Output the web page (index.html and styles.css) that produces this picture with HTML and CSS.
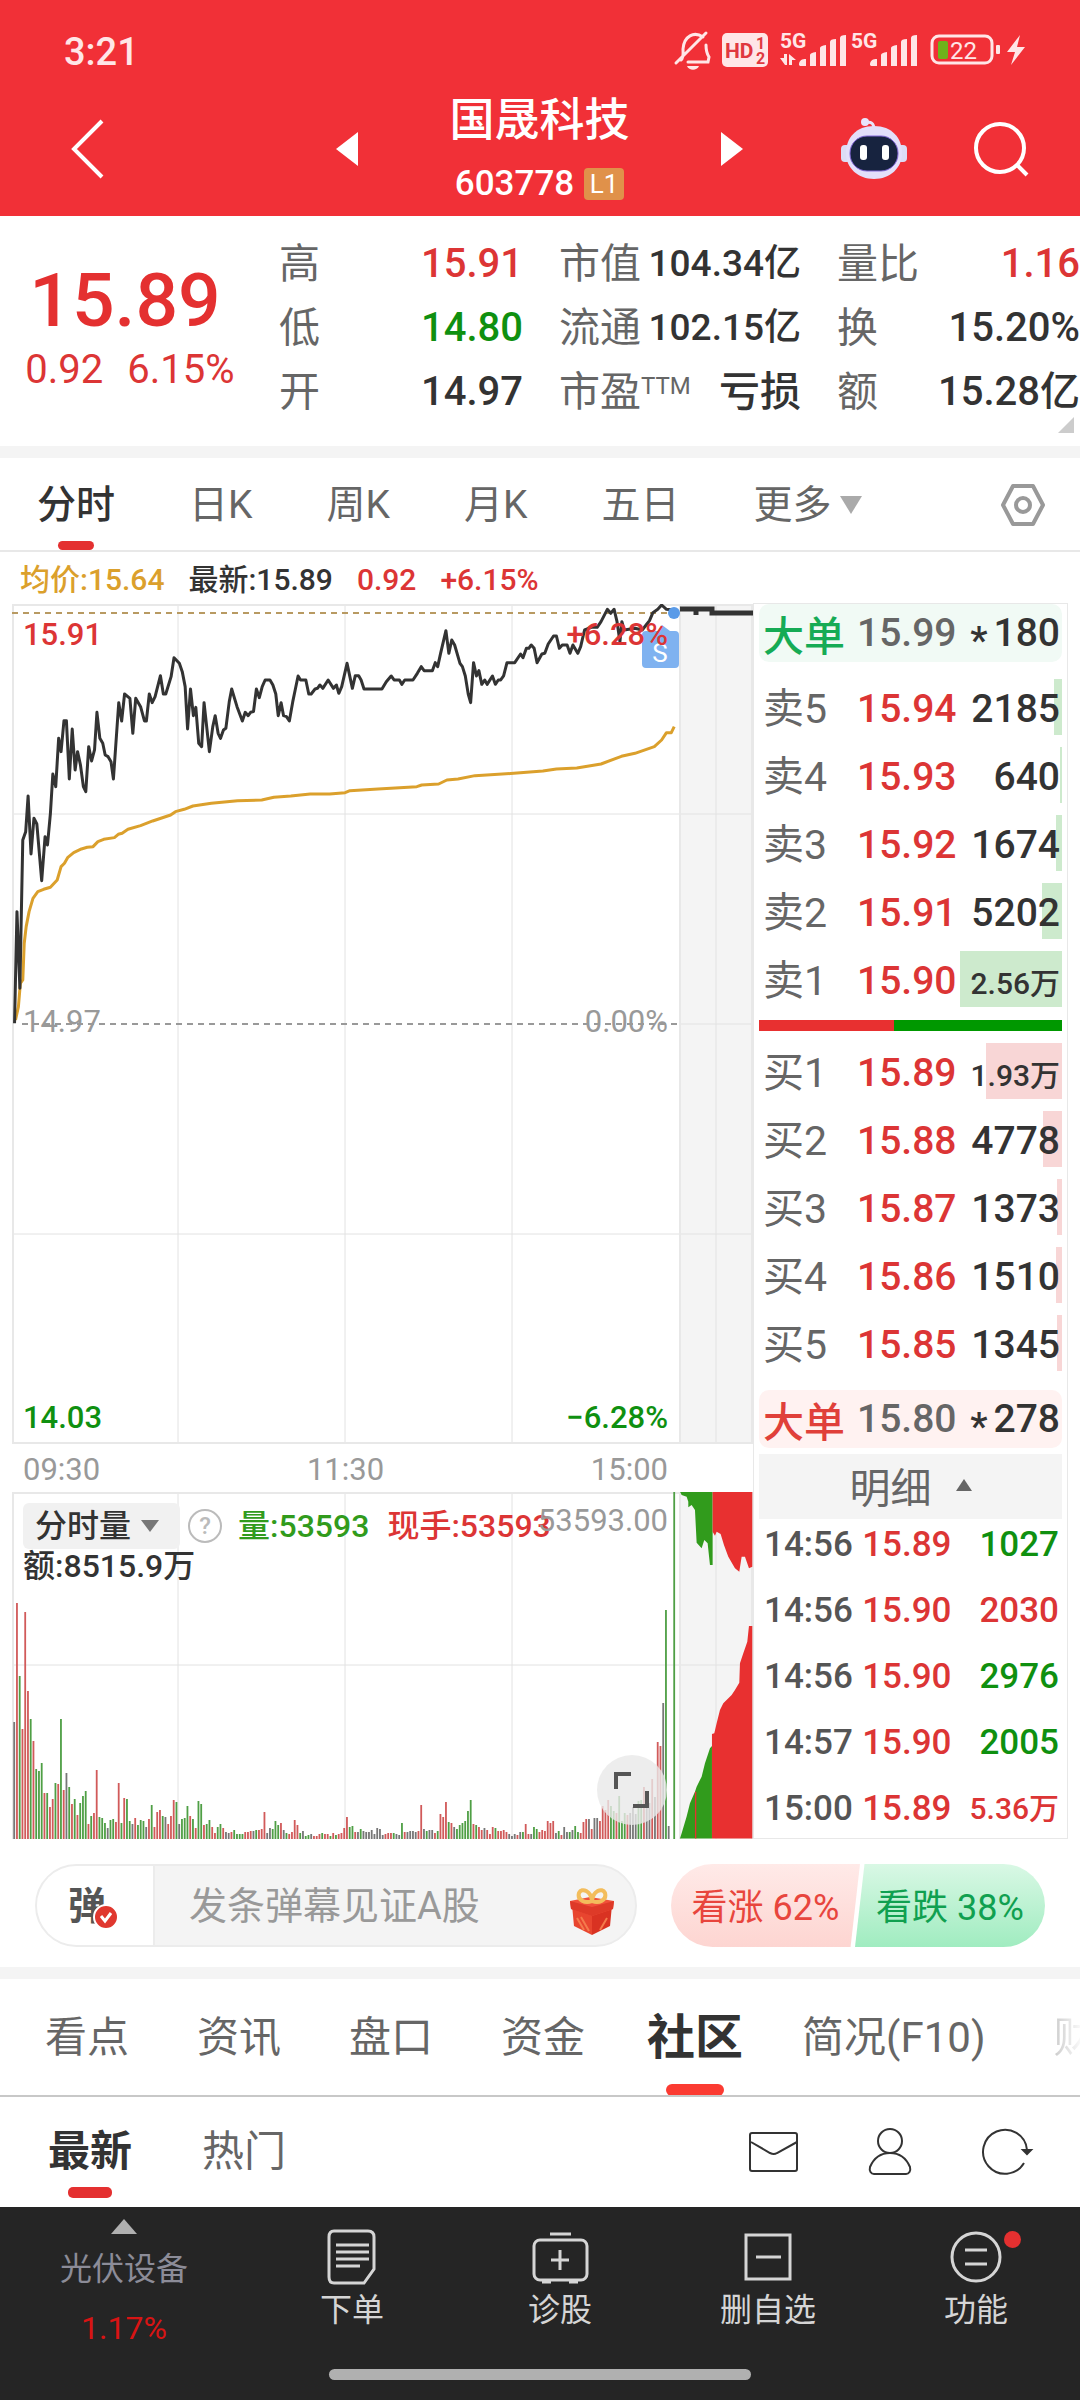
FILE: index.html
```
<!DOCTYPE html>
<html lang="zh-CN">
<head>
	<meta charset="UTF-8">
	<meta name="viewport" content="width=device-width">
	<title>国晟科技 603778</title>
	<link rel="stylesheet" href="styles.css">
</head>
<body>
<header class="header">
	<div class="status">
		<span class="clock">3:21</span>
		<svg class="status_icons" width="352" height="42" viewBox="0 0 352 42">
			<g fill="none" stroke="#ffe6e7" stroke-width="3" stroke-linecap="round">
				<path d="M7 29c3-3 2-6 2-11C10 5 20 0 29 6M32 14c0 6 1 9 3 12l-1 5H14M2 32L32 2"/>
				<rect x="258" y="5" width="60" height="27" rx="7"/>
			</g>
			<path d="M13 35h12c-2 5-10 5-12 0z" fill="#ffe6e7"/>
			<rect x="48" y="2" width="46" height="34" rx="5" fill="#ffe6e7"/>
			<g class="status_hd"><text x="51" y="27" font-size="21">HD</text><text x="82" y="18" font-size="16">1</text><text x="82" y="33" font-size="16">2</text></g>
			<g class="status_5g"><text x="106" y="17">5G</text><text x="177" y="17">5G</text></g>
			<g fill="#ffe6e7">
				<path d="M106 27h4v-4h3v11h-2zM115 34V23l7 6h-4v5z"/>
				<path d="M125 34c0-5 3-6 7-6v7h-6zM136 24q0-2 6-3v14h-6zM146 17q0-2 6-3v21h-6zM156 11q0-3 6-3v27h-6zM166 7q0-3 6-3v31h-6z"/>
				<path d="M196 34c0-5 3-6 7-6v7h-6zM207 24q0-2 6-3v14h-6zM217 17q0-2 6-3v21h-6zM227 11q0-3 6-3v27h-6zM237 7q0-3 6-3v31h-6z"/>
				<rect x="322" y="14" width="4" height="9" rx="1"/>
				<path d="M346 4l-13 17h8l-4 13 14-18h-8z"/>
			</g>
			<rect x="264" y="10" width="10" height="18" rx="2" fill="#6fb31b"/>
			<text class="status_bat" x="276" y="28">22</text>
		</svg>
	</div>
	<nav class="nav">
		<button class="back" aria-label="返回"><svg width="38" height="62" viewBox="0 0 38 62"><path d="M34 3L6 31l28 28" fill="none" stroke="#fff" stroke-width="4"/></svg></button>
		<button class="prev" aria-label="上一只"><svg width="22" height="34"><path d="M22 0v34L0 17z" fill="#fff"/></svg></button>
		<div class="stock">
			<h1>国晟科技</h1>
			<p>603778<span class="level">L1</span></p>
		</div>
		<button class="next" aria-label="下一只"><svg width="22" height="34"><path d="M0 0v34l22-17z" fill="#fff"/></svg></button>
		<button class="robot" aria-label="智能助手">
			<svg width="66" height="62" viewBox="0 0 66 62">
				<path d="M24 5c6-2 9 0 9 7" fill="none" stroke="#e8e4fb" stroke-width="3"/>
				<circle cx="24" cy="4" r="4" fill="#e8e4fb"/>
				<rect x="0" y="27" width="10" height="17" rx="4" fill="#dcdcf5"/>
				<rect x="56" y="27" width="10" height="17" rx="4" fill="#dcdcf5"/>
				<path d="M33 8c18 0 28 12 28 27S49 61 33 61 5 50 5 35 15 8 33 8z" fill="#e3dffa"/>
				<rect x="9" y="18" width="48" height="35" rx="17" fill="#17233f" stroke="#8368d8"/>
				<rect x="19" y="27" width="7" height="15" rx="3" fill="#fff"/>
				<rect x="41" y="27" width="7" height="15" rx="3" fill="#fff"/>
			</svg>
		</button>
		<button class="search" aria-label="搜索"><svg width="56" height="56" viewBox="0 0 56 56" fill="none" stroke="#fff" stroke-width="4"><circle cx="27" cy="27" r="24"/><path d="M44 44l10 10"/></svg></button>
	</nav>
</header>

<section class="quote">
	<div class="price">
		<strong>15.89</strong>
		<p><span>0.92</span><span>6.15%</span></p>
	</div>
	<table class="col_a">
		<tr><th>高</th><td class="red">15.91</td></tr>
		<tr><th>低</th><td class="green">14.80</td></tr>
		<tr><th>开</th><td>14.97</td></tr>
	</table>
	<table class="col_b">
		<tr><th>市值</th><td>104.34亿</td></tr>
		<tr><th>流通</th><td>102.15亿</td></tr>
		<tr><th>市盈<sup>TTM</sup></th><td class="word">亏损</td></tr>
	</table>
	<table class="col_c">
		<tr><th>量比</th><td class="red">1.16</td></tr>
		<tr><th>换</th><td>15.20%</td></tr>
		<tr><th>额</th><td>15.28亿</td></tr>
	</table>
	<i class="corner"></i>
</section>

<nav class="period">
	<button class="on">分时</button>
	<button>日K</button>
	<button>周K</button>
	<button>月K</button>
	<button>五日</button>
	<button class="more">更多<svg width="22" height="18"><path d="M0 0h22L11 18z" fill="#aaa"/></svg></button>
	<button class="setting" aria-label="设置"><svg width="46" height="44" viewBox="0 0 46 44" fill="none" stroke="#999" stroke-width="4"><path d="M13 3h20l10 19-10 19H13L3 22z" stroke-linejoin="round"/><circle cx="23" cy="22" r="7"/></svg></button>
</nav>

<main class="board">
	<div class="charts">
		<p class="legend"><span class="avg">均价:15.64</span><span>最新:15.89</span><span class="red">0.92</span><span class="red">+6.15%</span></p>
		<div class="chart price_chart">
			<svg viewBox="0 0 741 840" preserveAspectRatio="none">
				<rect x="668" width="73" height="840" fill="#f4f4f4"/>
				<path class="grid" d="M166 0v840M333 0v840M500 0v840M704 0v840M0 210h741M668 420h73M0 630h741"/>
				<path class="frame" d="M1 1h739v838H1zM668 0v840"/>
				<path d="M0 9h661" stroke="#b89a62" stroke-width="2" stroke-dasharray="6 5"/>
				<path d="M10 420h655" stroke="#999" stroke-width="2" stroke-dasharray="6 5"/>
				<g class="lines" transform="translate(-12 -54) scale(.4847 .3333)">
					<polyline stroke="#dba02c" points="32,1410 38,1370 42,1300 47,1290 50,1180 54,1130 60,1085 68,1045 78,1025 90,1018 104,1012 118,990 126,950 133,940 140,922 152,908 168,897 180,892 192,890 202,875 214,868 236,863 244,853 252,850 264,838 290,827 315,813 352,795 362,785 380,778 398,768 436,760 490,752 540,750 565,742 600,738 640,732 680,732 712,728 722,722 780,717 860,710 870,705 905,702 922,690 945,687 980,677 1060,670 1120,663 1148,657 1190,654 1240,642 1282,619 1310,610 1350,590 1365,570 1375,548 1385,548 1391,530"/>
					<polyline stroke="#333" points="30,1420 35,1085 41,1315 47,870 53,845 58,738 64,912 70,805 76,822 86,992 93,860 98,885 104,790 109,672 115,710 121,565 126,605 132,512 137,512 143,687 149,537 155,660 160,605 166,645 172,710 177,725 183,590 189,633 195,600 200,487 206,565 212,580 217,615 223,620 229,635 234,687 245,458 251,513 257,432 268,445 274,550 280,445 290,470 298,513 302,513 308,432 314,458 320,440 331,377 337,432 342,432 353,380 359,323 370,340 376,365 382,410 387,537 393,417 399,497 404,472 410,580 416,590 421,458 432,605 439,530 444,497 450,550 455,565 461,540 466,535 473,455 478,417 489,470 500,513 506,487 512,497 517,487 523,485 529,417 535,443 541,410 547,390 557,390 563,405 569,432 574,497 580,458 585,497 591,500 597,513 604,455 609,420 615,378 620,390 631,390 637,432 642,432 650,417 655,415 660,405 666,415 677,390 688,415 694,405 699,430 705,410 716,340 727,415 733,377 740,377 745,390 751,417 788,417 797,395 807,378 813,390 824,390 829,403 835,390 852,390 861,370 869,350 875,362 892,362 898,338 903,350 909,310 920,242 926,310 932,270 938,285 949,340 954,350 960,378 966,432 971,458 977,338 983,378 988,362 994,403 1000,390 1005,403 1016,378 1022,403 1028,390 1033,390 1039,378 1046,338 1062,338 1074,312 1079,323 1086,295 1091,295 1096,285 1102,295 1108,338 1118,312 1124,310 1131,282 1142,258 1148,258 1154,295 1160,285 1170,285 1176,310 1182,285 1192,310 1198,290 1206,240 1220,232 1232,232 1240,215 1253,178 1260,190 1267,178 1273,215 1279,275 1283,215 1288,240 1310,235 1325,240 1333,225 1340,212 1347,188 1357,178 1365,165 1375,178 1390,180"/>
				</g>
				<path d="M668 5h32v4h41M684 6v5" fill="none" stroke="#333" stroke-width="5"/>
				<circle cx="662" cy="9" r="6" fill="#5a9be8"/>
				<path d="M646 27l4-6 8 6h5q4 0 4 4v29q0 4-4 4h-29q-4 0-4-4V31q0-4 4-4z" fill="#7fb2f0"/>
				<text x="648" y="58" class="sell_mark">S</text>
			</svg>
			<span class="label top left red">15.91</span>
			<span class="label top right red">+6.28%</span>
			<span class="label middle left gray">14.97</span>
			<span class="label middle right gray">0.00%</span>
			<span class="label bottom left green">14.03</span>
			<span class="label bottom right green">−6.28%</span>
		</div>
		<div class="times"><span>09:30</span><span>11:30</span><span>15:00</span></div>
		<div class="chart volume_chart">
			<svg viewBox="0 0 741 347" preserveAspectRatio="none">
				<rect x="668" width="73" height="347" fill="#f4f4f4"/>
				<path class="grid" d="M166 0v347M333 0v347M500 0v347M704 0v347M0 173h741"/>
				<path class="frame" d="M1 347V1h739v346M668 0v347"/>
				<g id="bars"></g>
				<g transform="translate(358 -112) scale(.3333)">
					<path fill="#319b1c" d="M930 335l5 10 15 5 5 15v17l10-7 10 15 5 98 15 17 8-25 10 10 7 65h8V335zM930 1376l5-16 15-50 10-40 15-35 5-15 15-30 10-40 15-45 6-7v278z"/>
					<path fill="#e83030" d="M1028 335v120l7 12 5-12 12 7 10 33 13 35 20 35 13 10 7-45h10l12 35 10-5V335zM1026 1376v-314l7-2 7-30 10-40 10-20 25-25 10-15 13-22 2-58 10-30 12-35 5-47h10v638zM975 1235h4v141h-4z"/>
				</g>
			</svg>
			<div class="volume_head">
				<button class="select">分时量<svg width="18" height="12"><path d="M0 0h18l-9 12z" fill="#777"/></svg></button>
				<button class="help" aria-label="说明">?</button>
				<span class="vol">量:53593</span>
				<span class="red">现手:53593</span>
			</div>
			<p class="amount">额:8515.9万</p>
			<span class="label max right gray">53593.00</span>
			<button class="expand" aria-label="全屏"><svg width="38" height="38" viewBox="0 0 38 38" fill="none" stroke="#555" stroke-width="4"><path d="M3 18V3h15M20 35h14V20"/></svg></button>
		</div>
	</div>

	<aside class="side">
		<div class="big sell"><b>大单</b><span>15.99</span><em><small>*</small>180</em></div>
		<table class="orders asks">
			<tr><th>卖5</th><td>15.94</td><td><i style="width:8px"></i><span>2185</span></td></tr>
			<tr><th>卖4</th><td>15.93</td><td><i style="width:2px"></i><span>640</span></td></tr>
			<tr><th>卖3</th><td>15.92</td><td><i style="width:6px"></i><span>1674</span></td></tr>
			<tr><th>卖2</th><td>15.91</td><td><i style="width:20px"></i><span>5202</span></td></tr>
			<tr><th>卖1</th><td>15.90</td><td><i style="width:102px"></i><span class="wan">2.56万</span></td></tr>
		</table>
		<div class="ratio"><i style="width:44.5%"></i></div>
		<table class="orders bids">
			<tr><th>买1</th><td>15.89</td><td><i style="width:76px"></i><span class="wan">1.93万</span></td></tr>
			<tr><th>买2</th><td>15.88</td><td><i style="width:19px"></i><span>4778</span></td></tr>
			<tr><th>买3</th><td>15.87</td><td><i style="width:5px"></i><span>1373</span></td></tr>
			<tr><th>买4</th><td>15.86</td><td><i style="width:6px"></i><span>1510</span></td></tr>
			<tr><th>买5</th><td>15.85</td><td><i style="width:5px"></i><span>1345</span></td></tr>
		</table>
		<div class="big buy"><b>大单</b><span>15.80</span><em><small>*</small>278</em></div>
		<button class="detail_head">明细<svg width="16" height="12"><path d="M8 0l8 12H0z" fill="#666"/></svg></button>
		<table class="detail">
			<tr><th>14:56</th><td class="red">15.89</td><td class="green">1027</td></tr>
			<tr><th>14:56</th><td class="red">15.90</td><td class="red">2030</td></tr>
			<tr><th>14:56</th><td class="red">15.90</td><td class="green">2976</td></tr>
			<tr><th>14:57</th><td class="red">15.90</td><td class="green">2005</td></tr>
			<tr><th>15:00</th><td class="red">15.89</td><td class="red wan">5.36万</td></tr>
		</table>
	</aside>
</main>

<section class="danmu">
	<div class="danmu_box">
		<button class="danmu_switch" aria-label="弹幕开关">弹<svg width="26" height="26" viewBox="0 0 26 26"><circle cx="13" cy="13" r="12" fill="#e0382f" stroke="#fff" stroke-width="2"/><path d="M8 12l4 5 6-8" fill="none" stroke="#fff" stroke-width="3"/></svg></button>
		<input type="text" placeholder="发条弹幕见证A股" aria-label="发条弹幕">
		<button class="gift" aria-label="礼物">
			<svg width="46" height="48" viewBox="0 0 46 48">
				<path d="M3 17l20 6v24L5 38z" fill="#e8452f"/>
				<path d="M43 17l-20 6v24l18-9z" fill="#d93222"/>
				<path d="M1 13l20-4 24 4-1 8-21 7L2 21z" fill="#f0503a"/>
				<path d="M1 13l22 6 22-6-1 8-21 7L2 21z" fill="#de3a28"/>
				<path d="M8 30l7 12M12 29l8 14M31 42l7-12" stroke="#f47a4c" stroke-width="2"/>
				<path d="M23 13C16 16 8 12 10 5c3-6 12-2 13 8 1-10 10-14 13-8 2 7-6 11-13 8z" fill="none" stroke="#f3bd5c" stroke-width="4"/>
			</svg>
		</button>
	</div>
	<div class="vote">
		<button class="up">看涨 62%</button>
		<button class="down">看跌 38%</button>
	</div>
</section>

<nav class="tabs">
	<a href="#">看点</a>
	<a href="#">资讯</a>
	<a href="#">盘口</a>
	<a href="#">资金</a>
	<a href="#" class="on">社区</a>
	<a href="#">简况(F10)</a>
	<a href="#" class="fade">财务</a>
</nav>

<nav class="subtabs">
	<button class="on">最新</button>
	<button>热门</button>
	<div class="tools">
		<button aria-label="消息"><svg width="50" height="48" viewBox="0 0 50 48"><rect x="1" y="5" width="47" height="38" rx="2"/><path d="M2 14l19 11q4 2 7 0l20-11"/></svg></button>
		<button aria-label="我的"><svg width="50" height="48" viewBox="0 0 50 48"><circle cx="25" cy="13" r="12"/><path d="M25 25c11 0 17 7 20 14 1 4-1 7-4 7H9c-3 0-5-3-4-7 3-7 9-14 20-14z"/></svg></button>
		<button aria-label="刷新"><svg width="50" height="48" viewBox="0 0 50 48"><path d="M43 35A22 22 0 1 1 46 22"/><path d="M42 22h8l-4 4z" fill="#333"/></svg></button>
	</div>
</nav>

<footer class="footer">
	<div class="actions">
		<a href="#" class="sector">
			<svg width="26" height="15"><path d="M13 0l13 15H0z" fill="#b0b0b0"/></svg>
			<span>光伏设备</span>
			<em>1.17%</em>
		</a>
		<a href="#">
			<svg width="58" height="56" viewBox="0 0 58 56"><path d="M11 2h34q6 0 6 6v32L41 54H11q-5 0-5-6V8q0-6 5-6z"/><path d="M13 16h33M13 23h33M13 30h33M13 37h24"/></svg>
			<span>下单</span>
		</a>
		<a href="#">
			<svg width="58" height="56" viewBox="0 0 58 56"><rect x="3" y="11" width="53" height="40" rx="6"/><path d="M19 5h21M29 21v20M20 31h18M11 53h9M38 53h9"/></svg>
			<span>诊股</span>
		</a>
		<a href="#">
			<svg width="58" height="56" viewBox="0 0 58 56"><rect x="7" y="6" width="44" height="44"/><path d="M17 28h25"/></svg>
			<span>删自选</span>
		</a>
		<a href="#">
			<svg width="58" height="56" viewBox="0 0 58 56"><circle cx="29" cy="28" r="24"/><path d="M18 21h22M18 35h22"/></svg>
			<span>功能</span>
			<i class="dot"></i>
		</a>
	</div>
	<div class="home"></div>
</footer>

<script>
	//每分钟成交量，r涨 g跌 k平，数字是柱子高度
	var data = "k117 r236 g163 r110 r227 r148 g120 r98 g70 g68 g76 r46 g46 r32 r40 g56 r55 g120 r49 k66 g52 r35 g40 r24 g36 g43 g48 r15 g23 r26 r69 g22 g21 g16 k11 g19 g20 r17 r56 g16 r41 g40 g18 k15 r21 g14 g19 g18 k12 r20 g34 r12 r27 r29 g23 k22 r15 r23 r39 g37 k15 g20 g21 g33 r23 g20 r11 g38 g35 r14 g15 g19 r12 r6 g12 g15 r11 k7 k6 r7 g9 g5 g5 g5 r7 r7 r8 k8 g9 r9 r10 r27 k6 k11 g10 g18 g14 r16 k9 g6 r5 r7 r19 r14 g6 k8 g3 g4 k5 r3 r3 r5 g6 r5 r5 g3 r6 g4 r5 r6 r11 r22 g12 g13 r7 k7 g10 k8 k7 k7 " +
		"k9 k5 k11 k10 k4 r5 r6 r6 g6 k5 k4 g16 r7 k7 k8 k8 k7 r8 r34 k10 g8 k9 k9 r6 g8 r25 r22 r37 g17 r16 k12 g10 g14 g16 g18 g28 g39 r15 g14 r12 r9 k11 r9 r5 r12 g11 r8 r8 r9 r7 k5 k3 k5 r4 k7 g7 r15 r5 k5 g12 g10 r7 r9 r8 r18 r16 r18 k6 g8 r4 k12 k7 g7 k9 g13 g7 r6 r17 r20 k20 r10 k21 k21 r18 r33 r29 r39 g33 g28 r26 g43 g18 g26 r24 k26 k32 k25 g38 g39 r52 k38 k36 r60 k42 r97 r93 k136 g229 k13 k0 g347";
	var color = {r:"#d15a5a", g:"#4f9f45", k:"#777"};
	var list = data.split(" ");
	var html = "";
	for(var i = 0; i < list.length; i++){
		var h = parseInt(list[i].substr(1));
		html += '<rect x="' + (1.3 + i * 2.75).toFixed(2) + '" y="' + (347 - h) + '" width="1.8" height="' + h + '" fill="' + color[list[i].charAt(0)] + '"/>';
	}
	document.getElementById("bars").innerHTML = html;
</script>
</body>
</html>
```
FILE: styles.css
```
*{box-sizing:border-box;}
body{margin:0;background:#fff;color:#333;font-family:Roboto,"Noto Sans CJK SC",sans-serif;font-size:40px;overflow-x:hidden;}
button,input{margin:0;padding:0;border:0;background:none;color:inherit;font:inherit;}
h1,p{margin:0;font-weight:normal;}
a{color:inherit;text-decoration:none;}
i,em{font-style:normal;}
table{border-collapse:collapse;}
th,td{padding:0;font-weight:normal;text-align:left;}
svg{display:block;flex:none;}
.red{color:#dc3535;}
.green{color:#0f9010;}
.gray{color:#999;}

/* 头部 */
.header{background:#f13037;color:#fff;}
.status{display:flex;justify-content:space-between;align-items:center;height:92px;padding:12px 54px 0 64px;}
.clock{font-size:38px;font-weight:500;color:#ffe6e7;}
.status_icons{overflow:visible;}
.status_icons text{font-weight:700;}
.status_hd{fill:#e0383f;}
.status_5g{fill:#ffe6e7;font-size:21px;}
.status_icons .status_bat{fill:#ffe6e7;font-size:24px;font-weight:400;}
.nav{display:flex;align-items:center;height:124px;padding:0 51px 6px 68px;}
.nav button{margin-bottom:4px;}
.stock{flex:1;text-align:center;}
.stock h1{font-size:45px;line-height:60px;font-weight:500;}
.stock p{display:flex;justify-content:center;align-items:center;margin-top:6px;font-size:35px;line-height:54px;font-weight:500;}
.level{margin-left:10px;width:40px;background:#e0914a;border-radius:4px;font-size:26px;line-height:32px;font-weight:400;}
.prev{margin-left:230px;}
.robot{margin-left:98px;}
.search{margin-left:66px;}

/* 行情 */
.quote{position:relative;display:flex;align-items:flex-start;height:242px;padding-top:16px;border-bottom:12px solid #f4f4f4;}
.price{flex:none;width:250px;padding-top:26px;text-align:center;color:#e43030;}
.price strong{display:block;font-size:75px;line-height:84px;font-weight:500;}
.price p{display:flex;justify-content:center;gap:24px;padding-left:10px;font-size:40px;line-height:56px;color:#dc3535;}
.quote table{flex:none;display:block;}
.quote tbody{display:block;}
.quote tr{display:flex;justify-content:space-between;height:64px;}
.quote td{font-size:40px;line-height:64px;font-weight:500;text-align:right;white-space:nowrap;}
.quote th{font-size:41px;line-height:64px;color:#666;white-space:nowrap;}
.quote sup{font-size:24px;line-height:24px;vertical-align:12px;}
.col_a{width:244px;margin-left:29px;}
.quote .col_b{width:242px;margin-left:36px;}
.quote .col_b td{font-size:37px;}
.quote .col_b .word{font-size:41px;}
.quote .col_c{flex:1;margin-left:36px;}
.corner{position:absolute;right:6px;bottom:13px;border:8px solid transparent;border-right-color:#ccc;border-bottom-color:#ccc;}

/* 周期 */
.period{display:flex;align-items:center;gap:74px;height:94px;padding:0 34px 0 37px;border-bottom:2px solid #e8e8e8;color:#666;}
.period button{position:relative;padding-top:2px;font-size:39px;line-height:90px;white-space:nowrap;}
.period .on{color:#333;font-weight:500;}
.period .on::after,.subtabs .on::after,.tabs .on::after{content:"";position:absolute;left:50%;bottom:0;transform:translateX(-50%);width:36px;height:9px;border-radius:5px;background:#e43030;}
.period .more{display:flex;align-items:center;gap:8px;}
.period .setting{margin-left:auto;}

/* 图表 */
.board{display:flex;padding:0 12px;}
.charts{flex:1;min-width:0;}
.legend{display:flex;gap:24px;padding:3px 0 0 8px;font-size:30px;line-height:49px;font-weight:500;}
.legend .avg{color:#dba02c;}
.chart{position:relative;}
.chart>svg{width:100%;height:100%;}
.price_chart{height:840px;}
.volume_chart{height:347px;}
.grid{fill:none;stroke:#e2e2e2;stroke-width:1;}
.frame{fill:none;stroke:#e8e8e8;stroke-width:2;}
.lines{fill:none;}
.lines polyline{vector-effect:non-scaling-stroke;stroke-width:3;stroke-linejoin:round;}
.sell_mark{fill:#fff;font-size:26px;text-anchor:middle;}
.label{position:absolute;font-size:31px;line-height:36px;font-weight:500;}
.label.gray{font-weight:400;}
.left{left:11px;}
.right{right:85px;}
.top{top:13px;}
.middle{top:400px;}
.bottom{bottom:8px;}
.max{top:11px;}
.times{display:flex;justify-content:space-between;padding:3px 85px 0 11px;font-size:31px;line-height:45px;color:#999;}
.volume_head{position:absolute;left:11px;top:11px;display:flex;align-items:center;font-size:32px;line-height:46px;font-weight:500;white-space:nowrap;}
.select{display:flex;align-items:center;gap:10px;width:157px;height:46px;padding-left:12px;border-radius:6px;background:#f1f1f1;}
.help{width:34px;height:34px;margin:0 16px 0 8px;border:2px solid #bbb;border-radius:50%;color:#bbb;font-size:24px;line-height:28px;}
.vol{margin-right:18px;color:#319b1c;}
.amount{position:absolute;left:11px;top:54px;font-size:32px;line-height:40px;font-weight:500;}
.expand{position:absolute;right:86px;bottom:14px;display:flex;align-items:center;justify-content:center;width:70px;height:70px;border-radius:50%;background:rgba(232,232,232,.8);}

/* 盘口 */
.side{flex:none;width:315px;margin-top:51px;padding:0 5px 4px;border:1px solid #e8e8e8;font-size:39px;}
.side table{width:100%;}
.side th,.side td{vertical-align:middle;}
.big{display:flex;align-items:center;height:58px;padding:0 2px 0 4px;border-radius:10px;font-weight:500;}
.big b{width:94px;font-size:41px;font-weight:500;}
.big span{color:#666;}
.big em{flex:1;text-align:right;}
.big small{margin-right:6px;font-size:39px;line-height:0;vertical-align:-8px;}
.sell{background:#f1faf5;}
.sell b{color:#16ab55;}
.buy{margin-top:13px;background:#fff2f1;}
.buy b{color:#e0403a;}
.asks{margin-top:11px;}
.bids{margin-top:6px;}
.orders td,.orders th{height:68px;padding-top:4px;line-height:60px;}
.orders td{color:#dc3535;font-weight:500;}
.orders th{width:98px;padding-left:4px;color:#666;font-size:41px;}
.orders td:last-child{position:relative;padding-right:2px;text-align:right;color:#333;}
.orders i{position:absolute;right:0;top:6px;height:56px;}
.orders span{position:relative;}
.asks i{background:#cdeacd;}
.bids i{background:#f8d6d6;}
.side .wan{font-size:30px;line-height:40px;}
.ratio{margin-top:7px;height:11px;background:#009800;}
.ratio i{display:block;height:11px;background:#e83030;}
.detail_head{display:flex;align-items:center;justify-content:center;gap:24px;width:100%;height:65px;margin:6px 0 2px;padding-bottom:4px;background:#f4f4f4;color:#666;font-size:41px;}
.detail th,.detail td{height:66px;padding-bottom:18px;font-size:35px;line-height:48px;font-weight:500;}
.detail th{padding-left:5px;color:#555;}
.detail td:last-child{padding-right:3px;text-align:right;}
.detail tr:last-child>*{height:48px;padding-bottom:0;}

/* 弹幕 */
.danmu{display:flex;justify-content:space-between;height:140px;padding:25px 35px 0;border-bottom:12px solid #f4f4f4;}
.danmu_box{display:flex;align-items:center;width:602px;height:83px;border:2px solid #ececec;border-radius:42px;background:#f4f4f4;overflow:hidden;}
.danmu_switch{position:relative;width:118px;height:79px;padding:0 16px 6px 0;border-right:2px solid #ececec;background:#fff;color:#555;font-size:38px;font-weight:700;}
.danmu_switch svg{position:absolute;left:56px;top:38px;}
.danmu_box input{flex:1;min-width:0;padding-left:34px;font-size:38px;}
.danmu_box input::placeholder{color:#999;}
.gift{margin-right:20px;padding-top:12px;}
.vote{display:flex;width:374px;height:83px;border-radius:42px;overflow:hidden;font-size:36px;}
.vote button{padding-bottom:4px;white-space:nowrap;}
.up{width:189px;background:linear-gradient(#ffeae8,#fdd5d1);color:#e8453d;clip-path:polygon(0 0,100% 0,95% 100%,0 100%);}
.down{flex:1;margin-left:-5px;background:linear-gradient(#d9f8e5,#a0ecc0);color:#10a050;clip-path:polygon(5% 0,100% 0,100% 100%,0 100%);}

/* 下方标签 */
.tabs{display:flex;align-items:center;gap:68px;height:118px;padding-left:45px;border-bottom:2px solid #c8c8c8;color:#666;font-size:42px;white-space:nowrap;overflow:hidden;}
.tabs a{position:relative;line-height:117px;}
.tabs .on{margin:0 -9px 0 -6px;color:#333;font-size:48px;font-weight:700;}
.tabs .on::after{width:58px;height:12px;border-radius:6px;background:#fb3b32;}
.tabs .fade{background:linear-gradient(90deg,#ccc,#fff 30px);-webkit-background-clip:text;background-clip:text;color:transparent;}
.subtabs{display:flex;align-items:center;gap:70px;height:110px;padding:0 49px 0 48px;color:#666;font-size:42px;}
.subtabs button{position:relative;line-height:108px;}
.subtabs .on{color:#333;font-weight:700;}
.subtabs .on::after{bottom:8px;width:44px;height:11px;}
.tools{display:flex;gap:66px;margin-left:auto;}
.tools svg{fill:none;stroke:#333;stroke-width:2;overflow:visible;}

/* 底部 */
.footer{height:193px;background:#252525;color:#d5d5d5;}
.actions{display:flex;height:162px;}
.actions a{position:relative;display:flex;flex-direction:column;align-items:center;flex:208;padding-top:22px;font-size:32px;line-height:50px;}
.actions svg{fill:none;stroke:#d5d5d5;stroke-width:3;}
.actions .sector{flex:248;padding-top:12px;color:#8c8c98;}
.sector svg{stroke:none;}
.sector span{margin-top:10px;}
.sector em{margin-top:9px;color:#d81414;}
.dot{position:absolute;left:132px;top:24px;width:17px;height:17px;border-radius:50%;background:#e43030;}
.home{width:39%;height:11px;margin:0 auto;border-radius:6px;background:#b0b0b0;}
```
